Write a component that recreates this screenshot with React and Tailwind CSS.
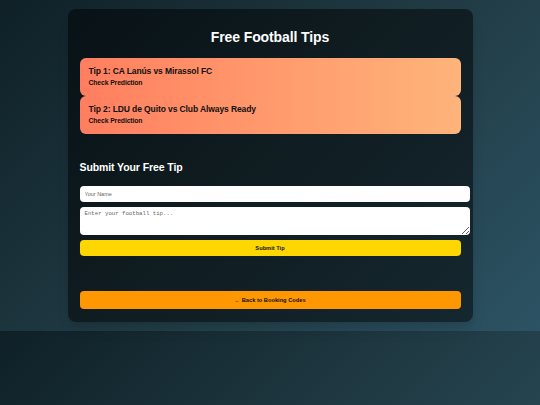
import React from 'react';

const tips = [
  { id: 1, title: 'Tip 1: CA Lanús vs Mirassol FC' },
  { id: 2, title: 'Tip 2: LDU de Quito vs Club Always Ready' },
];

export default function App() {
  return (
    <div
      className="min-h-[405px] w-full bg-[linear-gradient(135deg,#0f2027,#203a43,#2c5364)] bg-[length:100%_331px] bg-repeat pt-[9px]"
      style={{ fontFamily: '"Liberation Sans", Arial, sans-serif' }}
    >
      <div className="mx-auto w-[405px] rounded-[8px] bg-[rgba(0,0,0,0.5)] px-[12px] pt-[19px] pb-[13px] shadow-lg">
        {/* Header */}
        <h1 className="mb-[12px] text-center text-[14px] font-bold leading-[18px] tracking-[-0.1px] text-white">
          Free Football Tips
        </h1>

        {/* Tips */}
        <div className="flex flex-col">
          {tips.map((tip) => (
            <div
              key={tip.id}
              className="h-[38px] rounded-[6px] bg-gradient-to-r from-[#ff7e5f] to-[#feb47b] px-[9px] pt-[8px]"
            >
              <h3 className="text-[8.5px] font-bold leading-[10px] tracking-[-0.1px] text-[#111]">{tip.title}</h3>
              <p className="mt-[3px] text-[6.8px] font-bold leading-[8px] tracking-[-0.1px] text-[#111]">Check Prediction</p>
            </div>
          ))}
        </div>

        {/* Submit form */}
        <h2 className="mt-[27px] mb-[13px] text-[10.5px] font-bold leading-[12px] tracking-[-0.1px] text-white">
          Submit Your Free Tip
        </h2>
        <input
          type="text"
          placeholder="Your Name"
          className="block h-[16px] w-[390px] rounded-[4px] bg-white px-[5px] text-[5.5px] text-black placeholder:text-[#666] outline-none"
        />
        <textarea
          placeholder="Enter your football tip..."
          className="mt-[5px] block h-[28px] w-[390px] resize-y rounded-[4px] bg-white px-[5px] py-[3px] text-[5.7px] leading-[8px] text-black placeholder:text-[#666] outline-none"
          style={{ fontFamily: '"Liberation Mono", "DejaVu Sans Mono", monospace' }}
        />
        <button className="mt-[5px] block h-[16px] w-full rounded-[4px] bg-[#ffd700] text-center text-[5.7px] font-bold text-[#111]">
          Submit Tip
        </button>

        <button className="mt-[35px] block h-[18px] w-full rounded-[4px] bg-[#ff9800] text-center text-[5.7px] font-bold text-[#111]">
          ← Back to Booking Codes
        </button>
      </div>
    </div>
  );
}
